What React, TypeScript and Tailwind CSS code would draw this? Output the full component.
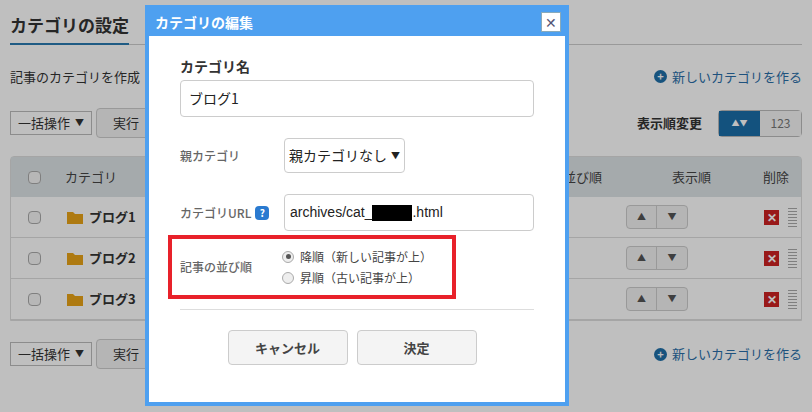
const font = { fontFamily: '"Noto Sans CJK JP", "Liberation Sans", sans-serif' };

function Plus() {
  return (
    <span className="inline-flex items-center justify-center w-[13px] h-[13px] rounded-full bg-[#1f6fa8] text-white text-[11px] leading-none font-bold">+</span>
  );
}

function Row({ name }: { name: string }) {
  return (
    <div className="flex items-center h-[41px] border-b border-[#ddd] text-[13px]">
      <div className="w-[46px] flex justify-center"><span className="w-[13px] h-[13px] border border-[#aaa] rounded-sm bg-[#f4f4f4]" /></div>
      <div className="w-[10px]" />
      <svg width="16" height="13" viewBox="0 0 16 13"><path d="M0 1h6l2 2h8v10H0z" fill="#e8a317" /></svg>
      <span className="ml-[6px] font-bold text-[#333]">{name}</span>
      <div className="flex-1" />
      <div className="flex border border-[#ccc] rounded h-[24px] mr-[76px] bg-[#f2f2f2]">
        <span className="w-[30px] flex items-center justify-center text-[9px] text-[#555] border-r border-[#ccc]">▲</span>
        <span className="w-[30px] flex items-center justify-center text-[9px] text-[#555]">▼</span>
      </div>
      <span className="w-[15px] h-[15px] bg-[#cc2222] text-white text-[12px] font-bold flex items-center justify-center leading-none">✕</span>
      <div className="ml-[9px] mr-[4px] flex flex-col gap-[2px]">
        {[0, 1, 2, 3, 4, 5, 6].map((i) => <span key={i} className="w-[9px] h-px bg-[#aaa]" />)}
      </div>
    </div>
  );
}

function Toolbar() {
  return (
    <div className="flex items-center gap-[4px]">
      <div className="w-[82px] h-[24px] border border-[#bbb] bg-white text-[13px] flex items-center px-[7px] text-[#333]">一括操作 <span className="ml-auto text-[9px]">▼</span></div>
      <div className="w-[60px] h-[30px] border border-[#ccc] rounded bg-[#f2f2f2] text-[13px] flex items-center justify-center text-[#333]">実行</div>
    </div>
  );
}

export default function App() {
  return (
    <div className="relative w-[812px] h-[412px] overflow-hidden bg-white" style={font}>
      {/* background page */}
      <div className="px-[10px] pt-[12px]">
        <div className="flex items-end border-b border-[#ccc]">
          <h1 className="text-[17px] font-bold text-[#333] pb-[5px] border-b-2 border-[#2a7ab0] -mb-px whitespace-nowrap">カテゴリの設定</h1>
        </div>
        <div className="flex items-center justify-between mt-[22px] text-[13px] text-[#333]">
          <span>記事のカテゴリを作成</span>
          <span className="flex items-center gap-[5px] text-[#2a6ea8]"><Plus />新しいカテゴリを作る</span>
        </div>
        <div className="flex items-center justify-between mt-[22px]">
          <Toolbar />
          <div className="flex items-center">
            <span className="text-[13px] font-bold text-[#333] mr-[16px]">表示順変更</span>
            <div className="flex h-[27px] border border-[#bbb] rounded text-[12px]">
              <span className="w-[41px] bg-[#1a6ea8] text-white flex items-center justify-center text-[8px] gap-[1px]">▲▼</span>
              <span className="w-[41px] bg-[#f4f4f4] text-[#777] flex items-center justify-center">123</span>
            </div>
          </div>
        </div>
        <div className="mt-[18px] border border-[#ddd] rounded-t">
          <div className="h-[40px] bg-[#dde3e6] flex items-center text-[13px] text-[#444]">
            <div className="w-[46px] flex justify-center"><span className="w-[13px] h-[13px] border border-[#aaa] rounded-sm bg-[#f4f4f4]" /></div>
            <span className="ml-[8px]">カテゴリ</span>
            <span className="ml-auto">並び順</span>
            <span className="ml-[70px]">表示順</span>
            <span className="ml-[52px] mr-[12px]">削除</span>
          </div>
          <Row name="ブログ1" />
          <Row name="ブログ2" />
          <Row name="ブログ3" />
        </div>
        <div className="flex items-center justify-between mt-[18px]">
          <Toolbar />
          <span className="flex items-center gap-[5px] text-[13px] text-[#2a6ea8]"><Plus />新しいカテゴリを作る</span>
        </div>
      </div>

      {/* overlay */}
      <div className="absolute inset-0 bg-black/25" />

      {/* modal */}
      <div className="absolute left-[145px] top-[5px] w-[424px] h-[401px] border-[4px] border-[#4ea0f0] bg-white flex flex-col">
        <div className="h-[28px] bg-[#4ea0f0] flex items-center justify-between pl-[6px] pr-[4px] -mt-px">
          <span className="text-white font-bold text-[14px]">カテゴリの編集</span>
          <span className="w-[20px] h-[20px] bg-white border border-[#8ab] flex items-center justify-center text-[#557] text-[14px] leading-none">✕</span>
        </div>
        <div className="px-[31px] pt-[20px] flex flex-col">
          <label className="text-[14px] font-bold text-[#333]">カテゴリ名</label>
          <div className="mt-[3px] h-[37px] border border-[#ccc] rounded flex items-center px-[8px] text-[14px] text-[#222]">ブログ1</div>
          <div className="flex items-center mt-[21px]">
            <span className="w-[104px] text-[12px] font-medium text-[#666]">親カテゴリ</span>
            <div className="w-[121px] h-[35px] border border-[#ccc] rounded flex items-center px-[4px] text-[14px] text-[#222]">親カテゴリなし<span className="ml-auto text-[9px]">▼</span></div>
          </div>
          <div className="flex items-center mt-[21px]">
            <span className="w-[104px] text-[12px] font-medium text-[#666] flex items-center gap-[4px]">カテゴリURL<span className="w-[14px] h-[14px] rounded-sm bg-[#2a7ad0] text-white text-[10px] font-bold flex items-center justify-center">?</span></span>
            <div className="flex-1 h-[37px] border border-[#ccc] rounded flex items-center px-[5px] text-[14px] text-[#222]" style={{ fontFamily: '"Liberation Sans", sans-serif' }}>archives/cat_<span className="inline-block w-[40px] h-[16px] bg-black" />.html</div>
          </div>
          <div className="mt-[4px] -ml-[12px] w-[288px] h-[64px] border-[4px] border-[#e8212a] flex items-center">
            <span className="w-[110px] pl-[8px] text-[12px] font-medium text-[#666]">記事の並び順</span>
            <div className="flex flex-col text-[12px] text-[#444] gap-[3px]">
              <span className="flex items-center gap-[6px]"><span className="w-[12px] h-[12px] rounded-full border border-[#aaa] bg-[#eee] flex items-center justify-center"><span className="w-[5px] h-[5px] rounded-full bg-[#555]" /></span>降順（新しい記事が上）</span>
              <span className="flex items-center gap-[6px]"><span className="w-[12px] h-[12px] rounded-full border border-[#aaa] bg-[#eee]" />昇順（古い記事が上）</span>
            </div>
          </div>
          <div className="mt-[10px] border-t border-[#ddd]" />
          <div className="mt-[20px] flex justify-center gap-[9px] ml-[-10px]">
            <div className="w-[120px] h-[35px] border border-[#ccc] rounded bg-[#f4f4f4] flex items-center justify-center text-[13px] font-bold text-[#444]">キャンセル</div>
            <div className="w-[120px] h-[35px] border border-[#ccc] rounded bg-[#f4f4f4] flex items-center justify-center text-[13px] font-bold text-[#444]">決定</div>
          </div>
        </div>
      </div>
    </div>
  );
}
